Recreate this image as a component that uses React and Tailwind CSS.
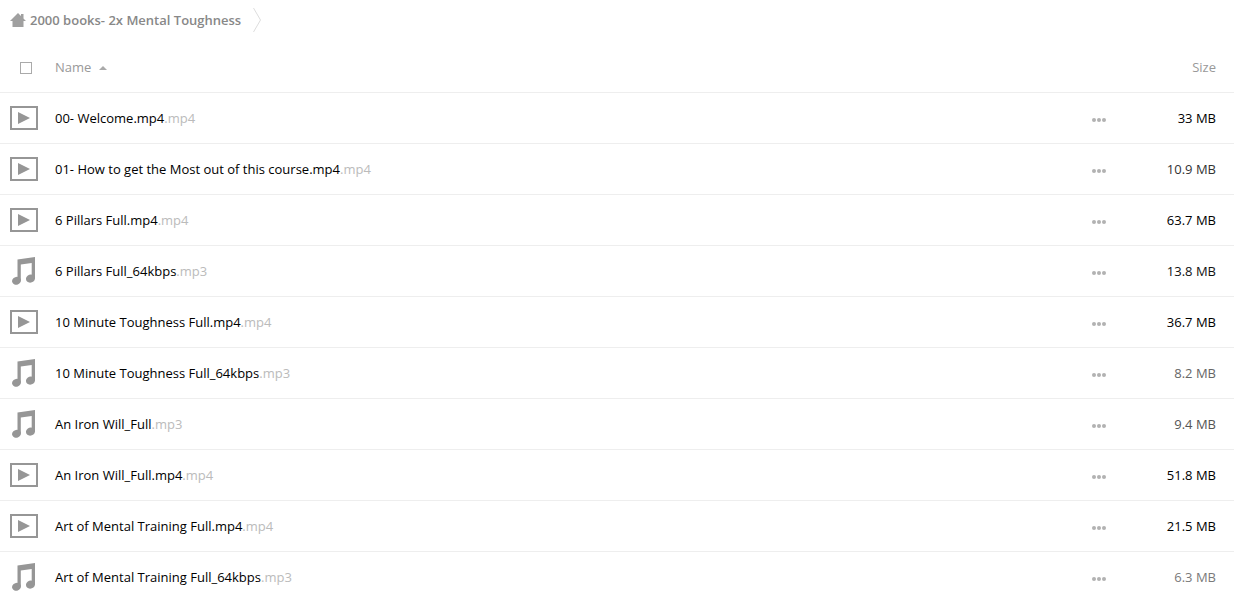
import React, { useState } from 'react'

const files = [
  { name: '00- Welcome.mp4', ext: '.mp4', size: '33 MB', color: 'text-black' },
  { name: '01- How to get the Most out of this course.mp4', ext: '.mp4', size: '10.9 MB', color: 'text-[#333333]' },
  { name: '6 Pillars Full.mp4', ext: '.mp4', size: '63.7 MB', color: 'text-black' },
  { name: '6 Pillars Full_64kbps', ext: '.mp3', size: '13.8 MB', color: 'text-[#111111]' },
  { name: '10 Minute Toughness Full.mp4', ext: '.mp4', size: '36.7 MB', color: 'text-black' },
  { name: '10 Minute Toughness Full_64kbps', ext: '.mp3', size: '8.2 MB', color: 'text-[#666666]' },
  { name: 'An Iron Will_Full', ext: '.mp3', size: '9.4 MB', color: 'text-[#555555]' },
  { name: 'An Iron Will_Full.mp4', ext: '.mp4', size: '51.8 MB', color: 'text-black' },
  { name: 'Art of Mental Training Full.mp4', ext: '.mp4', size: '21.5 MB', color: 'text-black' },
  { name: 'Art of Mental Training Full_64kbps', ext: '.mp3', size: '6.3 MB', color: 'text-[#7a7a7a]' },
]

const HomeIcon = () => (
  <svg className="w-4 h-4" viewBox="0 0 16 16" fill="#a0a0a0">
    <path d="M8 1L0 9h2.500v6h11V9H16l-2.500-2.500V2h-2.500v2z" />
  </svg>
)

const VideoIcon = () => (
  <svg className="w-7 h-7" viewBox="0 0 28 28">
    <rect x="1" y="3" width="26" height="22" fill="none" stroke="#969696" strokeWidth="2" />
    <path d="M8 8v12l12-6z" fill="#969696" />
  </svg>
)

const AudioIcon = () => (
  <svg className="w-7 h-7" viewBox="0 0 28 28" fill="#969696">
    <path d="M7.500 2.500L25 0v21h-3.300V6L10.800 7.600v16H7.500z" />
    <ellipse cx="6.500" cy="23.800" rx="4.500" ry="3.900" transform="rotate(-20 6.500 23.800)" />
    <ellipse cx="20.500" cy="21.600" rx="4.600" ry="4" transform="rotate(-20 20.500 21.600)" />
  </svg>
)

const App = () => {
  const [selected, setSelected] = useState(false)

  return (
    <main className="min-h-screen bg-white font-['Open_Sans',sans-serif] text-[13px] leading-5">
      <nav className="flex h-10 items-center pl-[10px]">
        <a href="#home" aria-label="Home">
          <HomeIcon />
        </a>
        <a href="#folder" className="ml-1 font-semibold text-[#888888]">2000 books- 2x Mental Toughness</a>
        <svg className="ml-3 h-6 w-2" viewBox="0 0 8 24" fill="none" stroke="#dddddd">
          <path d="M0.500 0L7.500 12L0.500 24" />
        </svg>
      </nav>

      <table className="w-full table-fixed border-collapse">
        <thead>
          <tr className="h-[52px] border-b border-[#eeeeee] text-[#999999]">
            <th className="w-[55px] pl-5 pt-1 text-left">
              <input
                type="checkbox"
                aria-label="Select all"
                checked={selected}
                onChange={() => setSelected(!selected)}
                className="block h-3 w-3 appearance-none border border-[#aaaaaa] bg-white checked:bg-[#aaaaaa]"
              />
            </th>
            <th className="pt-0.5 text-left font-normal">
              <button className="flex items-center gap-2">
                Name
                <svg className="h-2 w-2" viewBox="0 0 8 8" fill="#aaaaaa">
                  <path d="M0 7L4 3l4 4z" />
                </svg>
              </button>
            </th>
            <th className="w-12"></th>
            <th className="w-32 pr-[18px] pt-0.5 text-right font-normal">
              <button>Size</button>
            </th>
          </tr>
        </thead>
        <tbody>
          {files.map((file, index) => (
            <tr key={index} className="h-[51px] border-b border-[#eeeeee]">
              <td className="pl-[10px]">
                {file.ext === '.mp3' ? <AudioIcon /> : <VideoIcon />}
              </td>
              <td>
                <a href="#file" className="text-black">
                  {file.name}<span className="text-[#bbbbbb]">{file.ext}</span>
                </a>
              </td>
              <td>
                <button aria-label="More actions" className="block h-5 w-full pt-1">
                  <svg className="ml-auto mr-0 h-4 w-[14px]" viewBox="0 0 14 16" fill="#b2b2b2">
                    <circle cx="2" cy="8" r="2" />
                    <circle cx="7" cy="8" r="2" />
                    <circle cx="12" cy="8" r="2" />
                  </svg>
                </button>
              </td>
              <td className={`pr-[18px] text-right ${file.color}`}>{file.size}</td>
            </tr>
          ))}
        </tbody>
      </table>
    </main>
  )
}

export default App
